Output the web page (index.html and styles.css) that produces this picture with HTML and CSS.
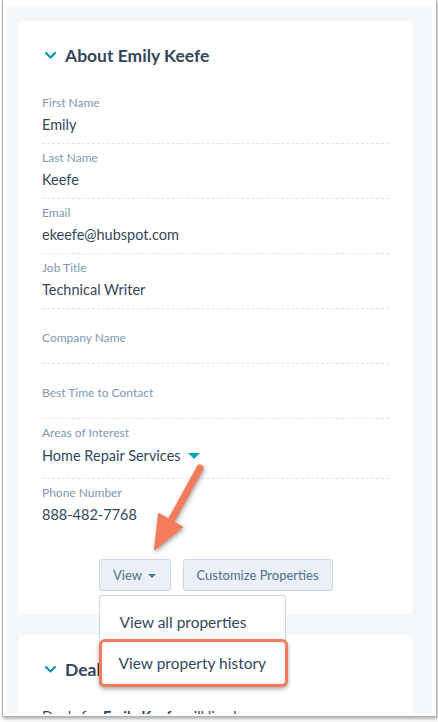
FILE: index.html
```html
<!DOCTYPE html>
<html lang="en">
<head>
    <meta charset="UTF-8">
    <meta name="viewport" content="width=device-width, initial-scale=1.0">
    <title>About Emily Keefe</title>
    <link rel="stylesheet" href="styles.css">
</head>
<body>
<div class="window">
    <div class="page">
        <div class="card">
            <h2 class="card-header">
                <svg class="chevron" width="11" height="7" viewBox="0 0 11 7"><polyline points="1,1 5.5,5.5 10,1" fill="none" stroke="#0091ae" stroke-width="2" stroke-linecap="round" stroke-linejoin="round"/></svg>
                About Emily Keefe
            </h2>
            <div class="field">
                <div class="field-label">First Name</div>
                <div class="field-value">Emily</div>
            </div>
            <div class="field">
                <div class="field-label">Last Name</div>
                <div class="field-value">Keefe</div>
            </div>
            <div class="field">
                <div class="field-label">Email</div>
                <div class="field-value">ekeefe@hubspot.com</div>
            </div>
            <div class="field">
                <div class="field-label">Job Title</div>
                <div class="field-value">Technical Writer</div>
            </div>
            <div class="field field-empty">
                <div class="field-label">Company Name</div>
            </div>
            <div class="field field-empty">
                <div class="field-label">Best Time to Contact</div>
            </div>
            <div class="field field-select">
                <div class="field-label">Areas of Interest</div>
                <div class="field-value">Home Repair Services <span class="select-caret"></span></div>
            </div>
            <div class="field field-last">
                <div class="field-label">Phone Number</div>
                <div class="field-value">888-482-7768</div>
            </div>
            <div class="actions">
                <div class="view-wrap">
                    <button class="btn btn-view">View <span class="btn-caret"></span></button>
                    <div class="dropdown">
                        <div class="dropdown-item">View all properties</div>
                        <div class="dropdown-item dropdown-item-highlight">View property history</div>
                    </div>
                </div>
                <button class="btn btn-customize">Customize Properties</button>
            </div>
        </div>
        <div class="card">
            <h2 class="card-header">
                <svg class="chevron" width="11" height="7" viewBox="0 0 11 7"><polyline points="1,1 5.5,5.5 10,1" fill="none" stroke="#0091ae" stroke-width="2" stroke-linecap="round" stroke-linejoin="round"/></svg>
                Deals
            </h2>
            <p class="card-text">Deals for <b>Emily Keefe</b> will live here.</p>
        </div>
    </div>
</div>
<svg class="callout-arrow" width="438" height="722" viewBox="0 0 438 722">
    <line x1="200" y1="468" x2="172" y2="519" stroke="#f47c5c" stroke-width="7" stroke-linecap="round"/>
    <polygon points="155,549 182,527 159,514" fill="#f47c5c" stroke="#f47c5c" stroke-width="2" stroke-linejoin="round"/>
</svg>
</body>
</html>
```

FILE: styles.css
```css
* {
    box-sizing: border-box;
    margin: 0;
    padding: 0;
}

body {
    position: relative;
    height: 722px;
    overflow: hidden;
    background-color: #fff;
    font-family: Lato, "Open Sans", sans-serif;
    color: #33475b;
}

.window {
    width: 435px;
    margin-left: 2px;
    padding: 6px 4px 2px 4px;
    border: 1px solid #b3b3b3;
    border-top: none;
    box-shadow: 1px 2px 3px rgba(0, 0, 0, 0.3);
}

.page {
    height: 708px;
    padding: 15px 19px 0 11px;
    background-color: #f5f8fa;
    overflow: hidden;
}

.card {
    background-color: #fff;
    border-radius: 4px;
    padding: 22px 24px 23px 24px;
    box-shadow: 0 0 2px rgba(45, 62, 80, 0.06);
}

.card + .card {
    margin-top: 21px;
}

.card-header {
    display: flex;
    align-items: center;
    height: 24px;
    margin-bottom: 22px;
    font-size: 17.5px;
    font-weight: 700;
    color: #33475b;
}

.chevron {
    margin-left: 3px;
    margin-right: 9px;
}

.field {
    padding: 6px 0;
    border-bottom: 1px dashed #dfe3eb;
}

.field-label {
    font-size: 12px;
    line-height: 16px;
    color: #7c98b6;
}

.field-value {
    margin-top: 2px;
    font-size: 14.5px;
    line-height: 24px;
    color: #33475b;
}

.field-empty {
    padding: 21px 0 17px 0;
}

.field-select {
    padding-bottom: 9px;
}

.field-select .field-value {
    line-height: 26px;
}

.field-last {
    padding-bottom: 0;
    border-bottom: none;
}

.select-caret {
    display: inline-block;
    margin-left: 4px;
    vertical-align: 2px;
    border-left: 6px solid transparent;
    border-right: 6px solid transparent;
    border-top: 6px solid #00a4bd;
}

.actions {
    display: flex;
    justify-content: center;
    gap: 12px;
    margin-top: 32px;
}

.view-wrap {
    position: relative;
}

.btn {
    height: 32px;
    padding: 0;
    font-family: Lato, "Open Sans", sans-serif;
    font-size: 13px;
    color: #506e91;
    background-color: #eaf0f6;
    border: 1px solid #cbd6e2;
    border-radius: 3px;
}

.btn-view {
    width: 72px;
}

.btn-customize {
    width: 150px;
}

.btn-caret {
    display: inline-block;
    margin-left: 3px;
    vertical-align: 2px;
    border-left: 4px solid transparent;
    border-right: 4px solid transparent;
    border-top: 4px solid #506e91;
}

.dropdown {
    position: absolute;
    top: 36px;
    left: 0;
    z-index: 5;
    width: 187px;
    background-color: #fff;
    border: 1px solid #cbd6e2;
    border-bottom: none;
    border-radius: 3px;
}

.dropdown-item {
    padding: 16px 20px 7px 20px;
    font-size: 15.5px;
    line-height: 20px;
    color: #33475b;
    white-space: nowrap;
}

.dropdown-item-highlight {
    margin: 0 -3px 0 -1px;
    padding: 11px 17px;
    background-color: #fff;
    border: 3px solid #f47c5c;
    border-radius: 6px;
    box-shadow: 0 2px 4px rgba(0, 0, 0, 0.35);
}

.card-text {
    margin-top: 24px;
    font-size: 14.5px;
    line-height: 24px;
}

.callout-arrow {
    position: absolute;
    top: 0;
    left: 0;
    pointer-events: none;
    filter: drop-shadow(1px 2px 2px rgba(0, 0, 0, 0.35));
}
```
